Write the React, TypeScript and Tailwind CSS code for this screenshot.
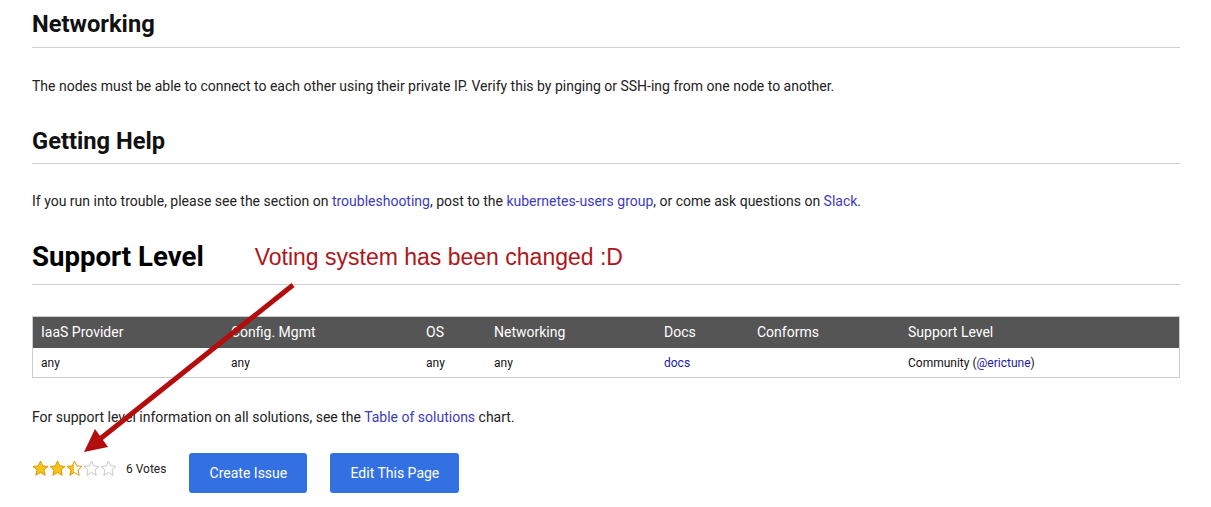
import React from 'react';

const font = { fontFamily: 'Roboto, "Liberation Sans", sans-serif' };

function Star({ fill }: { fill: 'full' | 'half' | 'empty' }) {
  const id = `g-${fill}`;
  const d =
    'M8.5 1 L10.7 5.9 L16 6.4 L12 10 L13.2 15.3 L8.5 12.6 L3.8 15.3 L5 10 L1 6.4 L6.3 5.9 Z';
  return (
    <svg width="17" height="17" viewBox="0 0 17 17">
      <defs>
        <linearGradient id={id} x1="0" y1="0" x2="1" y2="0">
          {fill === 'full' && (
            <>
              <stop offset="0" stopColor="#f7c21a" />
              <stop offset="1" stopColor="#f7c21a" />
            </>
          )}
          {fill === 'half' && (
            <>
              <stop offset="0.5" stopColor="#f7c21a" />
              <stop offset="0.5" stopColor="#ffffff" />
            </>
          )}
          {fill === 'empty' && (
            <>
              <stop offset="0" stopColor="#ffffff" />
              <stop offset="1" stopColor="#ffffff" />
            </>
          )}
        </linearGradient>
      </defs>
      <path
        d={d}
        fill={`url(#${id})`}
        stroke={fill === 'empty' ? '#c8c8c8' : '#d99a06'}
        strokeWidth="1"
        strokeLinejoin="round"
      />
    </svg>
  );
}

const cols = ['IaaS Provider', 'Config. Mgmt', 'OS', 'Networking', 'Docs', 'Conforms', 'Support Level'];

export default function App() {
  return (
    <div className="relative w-[1211px] h-[507px] bg-white overflow-hidden" style={font}>
      <div className="ml-[32px] w-[1148px]">
        {/* Networking */}
        <h2 className="mt-[8px] pb-[7px] text-[23.7px] leading-[32px] font-bold text-[#111] border-b border-[#cfcfcf]">
          Networking
        </h2>
        <p className="mt-[28px] text-[14px] leading-[20px] text-[#222]">
          The nodes must be able to connect to each other using their private IP. Verify this by pinging or SSH-ing
          from one node to another.
        </p>

        {/* Getting Help */}
        <h2 className="mt-[29px] pb-[6px] text-[23.7px] leading-[32px] font-bold text-[#111] border-b border-[#cfcfcf]">
          Getting Help
        </h2>
        <p className="mt-[27px] text-[14px] leading-[20px] text-[#222]">
          If you run into trouble, please see the section on{' '}
          <a className="text-[#3b3bc0]">troubleshooting</a>, post to the{' '}
          <a className="text-[#3b3bc0]">kubernetes-users group</a>, or come ask questions on{' '}
          <a className="text-[#3b3bc0]">Slack</a>.
        </p>

        {/* Support Level */}
        <div className="mt-[28px] pb-[9px] flex items-center border-b border-[#cfcfcf]">
          <h2 className="text-[27.6px] leading-[36px] font-bold text-[#000]">Support Level</h2>
          <span
            className="ml-[51px] text-[23px] leading-[36px] text-[#b0151a]"
            style={{ fontFamily: '"Liberation Sans", Arial, sans-serif' }}
          >
            Voting system has been changed :D
          </span>
        </div>

        {/* Table */}
        <div className="mt-[31px] border border-[#cccccc] text-[#111]">
          <div className="grid grid-cols-[190px_195px_68px_170px_93px_151px_1fr] bg-[#555555] h-[31px] items-center text-white text-[14px]">
            {cols.map((c) => (
              <div key={c} className="pl-[8px]">
                {c}
              </div>
            ))}
          </div>
          <div className="grid grid-cols-[190px_195px_68px_170px_93px_151px_1fr] h-[29px] items-center text-[12px]">
            <div className="pl-[8px]">any</div>
            <div className="pl-[8px]">any</div>
            <div className="pl-[8px]">any</div>
            <div className="pl-[8px]">any</div>
            <div className="pl-[8px]">
              <a className="text-[#1a1aa6]">docs</a>
            </div>
            <div className="pl-[8px]"></div>
            <div className="pl-[8px]">
              Community (<a className="text-[#1a1aa6]">@erictune</a>)
            </div>
          </div>
        </div>

        <p className="mt-[29px] text-[14px] leading-[20px] text-[#222]">
          For support level information on all solutions, see the{' '}
          <a className="text-[#3b3bc0]">Table of solutions</a> chart.
        </p>

        {/* Rating + buttons */}
        <div className="mt-[26px] flex items-center">
          <div className="flex items-center relative -top-[5px]">
            <Star fill="full" />
            <Star fill="full" />
            <Star fill="half" />
            <Star fill="empty" />
            <Star fill="empty" />
            <span className="ml-[9px] text-[12px] text-[#222] relative top-[1px]">6 Votes</span>
          </div>
          <button className="ml-[23px] w-[118px] h-[40px] rounded-[3px] bg-[#3371e3] text-white text-[14px]">
            Create Issue
          </button>
          <button className="ml-[23px] w-[129px] h-[40px] rounded-[3px] bg-[#3371e3] text-white text-[14px]">
            Edit This Page
          </button>
        </div>
      </div>

      {/* annotation arrow */}
      <svg className="absolute left-0 top-0 pointer-events-none" width="1211" height="507">
        <line x1="293" y1="285" x2="100" y2="439" stroke="#b30d0d" strokeWidth="5" />
        <polygon points="84,452 108,447 95,429" fill="#b30d0d" />
      </svg>
    </div>
  );
}
